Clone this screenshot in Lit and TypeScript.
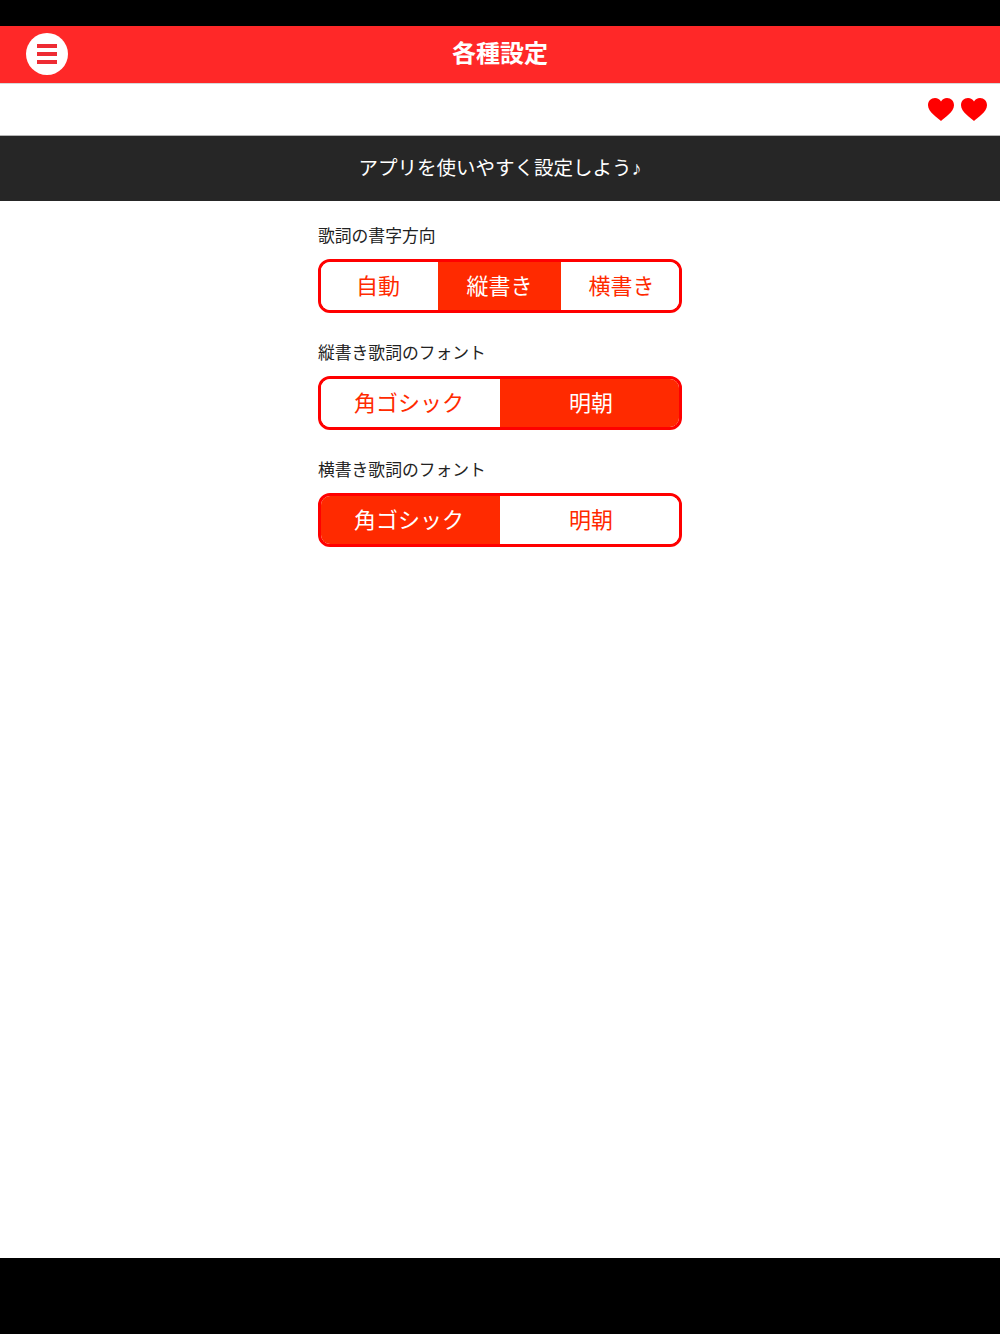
import { LitElement, html, css } from "lit";
import { customElement } from "lit/decorators.js";

const heart = html`<svg class="heart" viewBox="0 0 28 24" width="28" height="23" preserveAspectRatio="none"><path d="M14 24 C11 20.5 1 15 1 7.5 C1 3 4 0 8 0 C10.6 0 12.8 1.4 14 3.6 C15.2 1.4 17.4 0 20 0 C24 0 27 3 27 7.5 C27 15 17 20.5 14 24 Z" fill="#ff0000"/></svg>`;

type Opt = { t: string; w: number; on?: boolean };

@customElement("app-root")
export class AppRoot extends LitElement {
  static styles = css`
    :host {
      display: flex;
      flex-direction: column;
      width: 1000px;
      height: 1334px;
      background: #000;
      font-family: "Noto Sans CJK JP", "Liberation Sans", sans-serif;
      overflow: hidden;
    }
    .nav {
      margin-top: 26px;
      height: 57px;
      flex: none;
      background: #ff2828;
      border-bottom: 1px solid #d8d8d8;
      box-sizing: content-box;
      display: flex;
      align-items: center;
      justify-content: center;
      position: relative;
    }
    .menu {
      position: absolute;
      left: 26px;
      top: 7px;
      width: 42px;
      height: 42px;
      border-radius: 50%;
      background: #fff;
      display: flex;
      flex-direction: column;
      align-items: center;
      justify-content: center;
      gap: 4px;
    }
    .menu i {
      display: block;
      width: 20px;
      height: 4px;
      background: #ee2b33;
    }
    .title {
      color: #fff;
      font-size: 24px;
      font-weight: 700;
      line-height: 1;
      padding-bottom: 5px;
    }
    .page {
      flex: none;
      height: 1174px;
      background: #fff;
      display: flex;
      flex-direction: column;
    }
    .hearts {
      height: 51px;
      flex: none;
      display: flex;
      justify-content: flex-end;
      align-items: center;
      gap: 5px;
      padding-right: 12px;
      border-bottom: 1px solid #b5b5b5;
      box-sizing: content-box;
    }
    .banner {
      height: 65px;
      flex: none;
      background: #262626;
      color: #fff;
      font-size: 19.5px;
      display: flex;
      align-items: center;
      justify-content: center;
      padding-bottom: 5px;
      box-sizing: border-box;
    }
    .note {
      font-family: "Liberation Sans", sans-serif;
      display: inline-block;
      width: 10px;
    }
    .form {
      width: 364px;
      margin: 0 auto;
      padding-top: 22px;
      display: flex;
      flex-direction: column;
      gap: 27px;
    }
    .label {
      font-size: 16.8px;
      line-height: 24px;
      color: #222;
      margin-bottom: 12px;
    }
    .seg {
      display: flex;
      height: 54px;
      box-sizing: border-box;
      border: 3px solid #ff0000;
      border-radius: 12px;
      overflow: hidden;
    }
    .opt {
      display: flex;
      align-items: center;
      justify-content: center;
      color: #ff2a00;
      font-size: 22px;
      background: #fff;
      flex: none;
      box-sizing: border-box;
      padding-bottom: 5px;
    }
    .opt.first {
      padding-right: 3px;
    }
    .opt.last {
      padding-left: 3px;
    }
    .opt.on {
      color: #fff;
      background: #ff2a00;
    }
  `;

  private seg(label: string, opts: Opt[]) {
    return html`<section>
      <div class="label">${label}</div>
      <div class="seg">
        ${opts.map(
          (o, i) => html`<div
            class="opt ${o.on ? "on" : ""} ${i === 0 ? "first" : ""} ${i === opts.length - 1 ? "last" : ""}"
            style="width:${o.w}px"
          >
            ${o.t}
          </div>`
        )}
      </div>
    </section>`;
  }

  render() {
    return html`
      <div class="nav">
        <div class="menu"><i></i><i></i><i></i></div>
        <div class="title">各種設定</div>
      </div>
      <div class="page">
        <div class="hearts">${heart}${heart}</div>
        <div class="banner"><span>アプリを使いやすく設定しよう<span class="note">♪</span></span></div>
        <div class="form">
          ${this.seg("歌詞の書字方向", [
            { t: "自動", w: 117 },
            { t: "縦書き", w: 123, on: true },
            { t: "横書き", w: 118 },
          ])}
          ${this.seg("縦書き歌詞のフォント", [
            { t: "角ゴシック", w: 179 },
            { t: "明朝", w: 179, on: true },
          ])}
          ${this.seg("横書き歌詞のフォント", [
            { t: "角ゴシック", w: 179, on: true },
            { t: "明朝", w: 179 },
          ])}
        </div>
      </div>
    `;
  }
}
